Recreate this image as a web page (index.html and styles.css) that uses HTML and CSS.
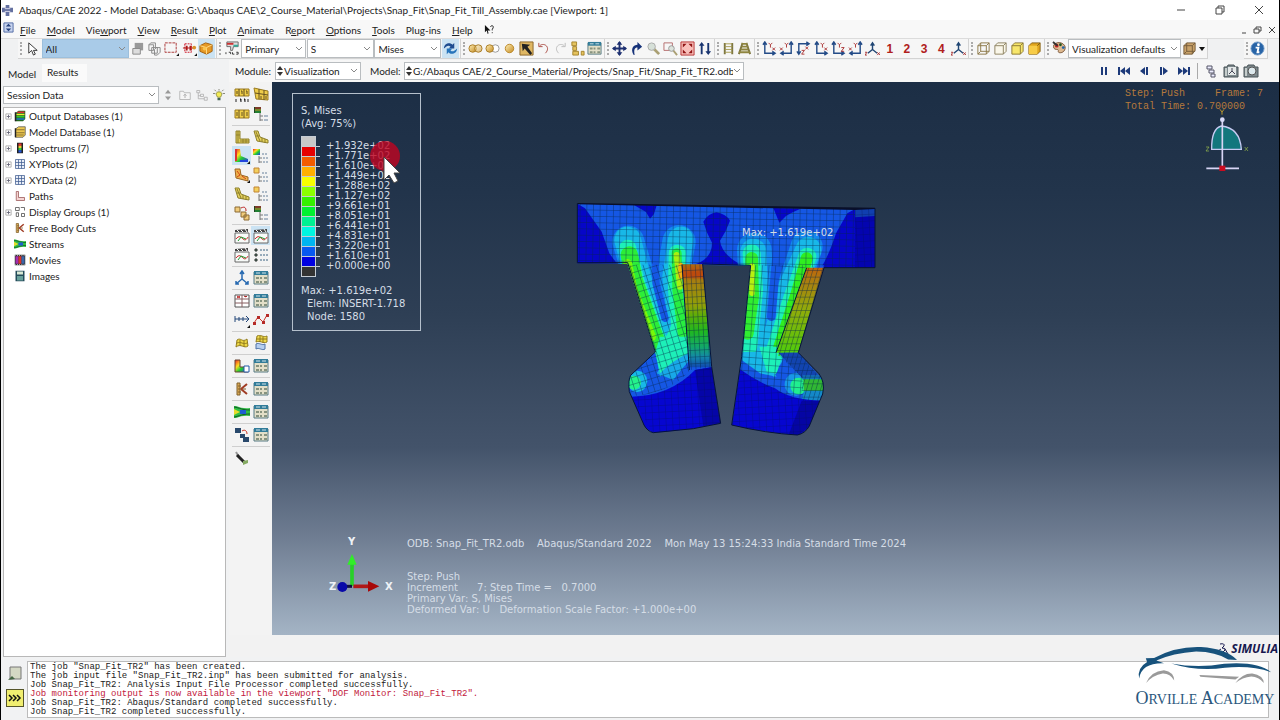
FILE: index.html
```html
<!DOCTYPE html>
<html lang="en">
<head>
<meta charset="utf-8">
<title>Abaqus/CAE 2022</title>
<link rel="stylesheet" href="styles.css">
</head>
<body>
<svg class="defs" aria-hidden="true">
  <defs>
    <linearGradient id="rainbow" x1="0" y1="0" x2="1" y2="1"><stop offset="0" stop-color="#e22"/><stop offset=".35" stop-color="#fd2"/><stop offset=".6" stop-color="#2c3"/><stop offset="1" stop-color="#23e"/></linearGradient>
    <linearGradient id="gold" x1="0" y1="0" x2="1" y2="1"><stop offset="0" stop-color="#fff0b8"/><stop offset="1" stop-color="#c48a20"/></linearGradient>
  </defs>
  <symbol id="cursor" viewBox="0 0 16 16"><path d="M4 2v11l3-3 2 5 2-1-2-4h4z" fill="#fff" stroke="#333"/></symbol>
  <symbol id="layers" viewBox="0 0 16 16"><path d="M5 2h9v8H5z" fill="#999"/><path d="M3 8h8v6H3z" fill="#ddd" stroke="#888"/></symbol>
  <symbol id="cubes" viewBox="0 0 16 16"><path d="M2 4l2-2h5v5M2 4h5v6H2zM5 7h6v6H5zM8 9l2-2h4v5l-3 3H8z" fill="#f5f5f5" stroke="#888"/></symbol>
  <symbol id="marquee" viewBox="0 0 16 16"><path d="M1 2h12v10H1z" fill="none" stroke="#a33" stroke-dasharray="3 1"/><path d="M13 16h3v-3z" fill="#111"/></symbol>
  <symbol id="entity" viewBox="0 0 16 16"><path d="M3 3h7v9H3z" fill="none" stroke="#c12" stroke-dasharray="2 1"/><path d="M4 5h2v5H4zM8 5h2v5H8zM1 7h12v1H1z" fill="#b01818"/><circle cx="13" cy="7" r="2" fill="#d9902c"/><path d="M13 16h3v-3z" fill="#111"/></symbol>
  <symbol id="box" viewBox="0 0 16 16"><path d="M1 5l6-3 7 2v7l-6 3-7-3z" fill="#e69a26" stroke="#a35f0c"/><path d="M1 5l7 2 6-3M8 7v7" fill="none" stroke="#ffdc8a"/><circle cx="6" cy="8" r="2" fill="#f9c552"/></symbol>
  <symbol id="fieldout" viewBox="0 0 16 16"><path d="M2 1h12v5H9l-1 4H6V6H2z" fill="#ddd" stroke="#666"/><path d="M2 2h7v2H2z" fill="#c33"/><path d="M9 4h5v2H9z" fill="#3a9"/><path d="M1 12v2M4 12h2v2M8 12v2h2M12 12h2v2h-2" stroke="#333" fill="none"/></symbol>
  <symbol id="sync" viewBox="0 0 16 16"><path d="M1 8c0-6 7-7 9-4l2-2v6H6l2-2C6 4 4 5 1 8z" fill="#1f4c90"/><path d="M15 8c0 6-7 7-9 4l-2 2V8h6l-2 2c2 2 4 1 7-2z" fill="#2774bb"/></symbol>
  <symbol id="union" viewBox="0 0 16 16"><circle cx="5" cy="8" r="4" fill="url(#gold)" stroke="#a87a22"/><circle cx="11" cy="8" r="4" fill="url(#gold)" stroke="#a87a22" fill-opacity=".6"/></symbol>
  <symbol id="differ" viewBox="0 0 16 16"><circle cx="11" cy="8" r="4" fill="#fff" stroke="#999"/><circle cx="5" cy="8" r="4" fill="url(#gold)" stroke="#a87a22"/></symbol>
  <symbol id="ball" viewBox="0 0 16 16"><circle cx="8" cy="8" r="4.500" fill="url(#gold)" stroke="#b98527"/></symbol>
  <symbol id="pick" viewBox="0 0 16 16"><path d="M1 1h14v14H1z" fill="#dfb763" stroke="#8b6527"/><path d="M3 3l9 1-3 2 5 7-2 2-6-7-2 3z" fill="#222"/></symbol>
  <symbol id="undo" viewBox="0 0 16 16"><path d="M3 2v4h4M4 5c5-4 12 2 6 8" fill="none" stroke="#a8483f"/></symbol>
  <symbol id="redo" viewBox="0 0 16 16"><path d="M13 2v4H9M12 5C7 1 0 7 6 13" fill="none" stroke="#bbb"/></symbol>
  <symbol id="parts" viewBox="0 0 16 16"><path d="M2 1h5v4H2zM3 6h4v4H3zM3 11h6v4H3zM12 11h3v4h-3z" fill="#e5c35e" stroke="#a4832c"/></symbol>
  <symbol id="panel" viewBox="0 0 16 16"><path d="M1 2h14v12H1z" fill="#e3dfc8" stroke="#567b84"/><path d="M1 1h14v4H1z" fill="#327c99"/><path d="M3 3h4M9 3h4" stroke="#cfe3ea"/><path d="M3 7h3v2H3zM7 7h2v2H7zM11 7h3v2h-3zM3 11h3v2H3zM7 11h2v2H7zM11 11h3v2h-3z" fill="#87937f"/></symbol>
  <symbol id="pan" viewBox="0 0 16 16"><path d="M8 1v14M1 8h14" stroke="#1c2f70" stroke-width="2"/><path d="M8 0l3 4H5zM8 16l3-4H5zM0 8l4-3v6zM16 8l-4-3v6z" fill="#1c2f70"/></symbol>
  <symbol id="rotate" viewBox="0 0 16 16"><path d="M5 15C1 8 5 4 9 4V1l5 5-5 4V7c-3 0-4 2-3 8z" fill="#17337a"/></symbol>
  <symbol id="zoomer" viewBox="0 0 16 16"><path d="M8 8l6 6" stroke="#aaa074" stroke-width="3"/><circle cx="6" cy="6" r="4" fill="#d6e0d8" stroke="#aaa"/></symbol>
  <symbol id="zoombox" viewBox="0 0 16 16"><path d="M1 2h9v8H1z" fill="none" stroke="#b46c6c"/><path d="M10 9l5 6" stroke="#aaa074" stroke-width="2"/><circle cx="9" cy="8" r="3" fill="#dce3dc" stroke="#999"/></symbol>
  <symbol id="fit" viewBox="0 0 16 16"><path d="M1 1h14v14H1z" fill="#f9c0bb" stroke="#b63232"/><path d="M3 3h4L3 7zM13 3H9l4 4zM3 13h4L3 9zM13 13H9l4-4z" fill="#921515"/></symbol>
  <symbol id="updown" viewBox="0 0 16 16"><path d="M5 1l3 4H6v9H4V5H2zM12 15l3-4h-2V2h-2v9H9z" fill="#17336f"/></symbol>
  <symbol id="parallel" viewBox="0 0 16 16"><path d="M4 2v12M12 2v12" stroke="#7c753f" stroke-width="2"/><path d="M4 3h8M4 6h8M4 9h8M4 12h8" stroke="#a59b50" fill="none"/></symbol>
  <symbol id="persp" viewBox="0 0 16 16"><path d="M6 2L2 14M10 2l4 12" stroke="#7c753f" stroke-width="2"/><path d="M5 3h6M5 6h7M4 9h8M2 12h12" stroke="#8e853f" stroke-width="2" fill="none"/></symbol>
  <symbol id="axesL" viewBox="0 0 16 16"><path d="M3 2v11h11M1 4l2-3 2 3M11 11l3 2-3 2" fill="none" stroke="#234b87" stroke-width="1.500"/><path d="M7 2l2 2 2-2M9 4v3M11 7l3 3M14 7l-3 3" stroke="#a33" fill="none"/></symbol>
  <symbol id="axesR" viewBox="0 0 16 16"><path d="M13 2v11H3M11 4l2-3 2 3M5 11l-3 2 3 2" fill="none" stroke="#234b87" stroke-width="1.500"/><path d="M6 2l2 2 2-2M8 4v3M1 7l3 3M4 7l-3 3" stroke="#a33" fill="none"/></symbol>
  <symbol id="axesD" viewBox="0 0 16 16"><path d="M3 14V3h10M1 11l2 3 2-3M11 1l3 2-3 2" fill="none" stroke="#234b87" stroke-width="1.500"/><path d="M10 6l3 3M13 6l-3 3M6 10h3l-3 4h3" stroke="#a33" fill="none"/></symbol>
  <symbol id="axesZ" viewBox="0 0 16 16"><path d="M3 2v11h11M1 4l2-3 2 3M11 11l3 2-3 2" fill="none" stroke="#234b87" stroke-width="1.500"/><path d="M7 2l2 2 2-2M9 4v3M11 7h3l-3 4h3" stroke="#a33" fill="none"/></symbol>
  <symbol id="iso" viewBox="0 0 16 16"><path d="M8 3v6l5 4M8 9l-5 4M6 5l2-3 2 3" fill="none" stroke="#204674" stroke-width="1.500"/><path d="M0 12h2l-2 3h2M13 12l3 3M16 12l-3 3" stroke="#a33" fill="none"/></symbol>
  <symbol id="wire" viewBox="0 0 16 16"><path d="M2 5h9v9H2zM5 2h9v9H5zM2 5l3-3M11 5l3-3M2 14l3-3M11 14l3-3" fill="none" stroke="#8c7747"/></symbol>
  <symbol id="hidden" viewBox="0 0 16 16"><path d="M2 5l3-3h9v9l-3 3H2zM2 5h9v9M11 5l3-3" fill="#faf7ea" stroke="#8c8160"/></symbol>
  <symbol id="fill" viewBox="0 0 16 16"><path d="M2 5l3-3h9v9l-3 3H2zM2 5h9v9M11 5l3-3" fill="#f7e66b" stroke="#8c7934"/></symbol>
  <symbol id="shade" viewBox="0 0 16 16"><path d="M2 5l3-3h9v9l-3 3H2z" fill="#e0a51e" stroke="#88641b"/><path d="M2 5h9v9H2z" fill="#f7cc48"/><path d="M11 5l3-3" stroke="#755b16"/></symbol>
  <symbol id="palette" viewBox="0 0 16 16"><path d="M2 4c5-5 13-1 12 4s-6 5-7 4 1-3-2-3-4-2-3-5z" fill="#ddb990" stroke="#795438"/><circle cx="5" cy="5" r="2" fill="#c22"/><circle cx="9" cy="4" r="1.500" fill="#252"/><circle cx="12" cy="7" r="1.500" fill="#26a"/><path d="M1 1l5 4" stroke="#333" stroke-width="2"/></symbol>
  <symbol id="cubebrown" viewBox="0 0 16 16"><path d="M2 5l3-3h9v8l-3 4H2zM2 5h9v9M11 5l3-3M5 2v9M5 11h9M5 11l-3 3" fill="#c8a169" stroke="#765d3b"/></symbol>
  <symbol id="info" viewBox="0 0 16 16"><circle cx="8" cy="8" r="7" fill="#2864a7" stroke="#77a0cc"/><circle cx="9" cy="4" r="1.500" fill="#fff"/><path d="M6 7h3l-1 5h2" fill="none" stroke="#fff" stroke-width="2"/></symbol>
  <symbol id="pause" viewBox="0 0 16 16"><path d="M5 4h2v8H5zM9 4h2v8H9z"/></symbol>
  <symbol id="first" viewBox="0 0 16 16"><path d="M2 4h2v8H2zM9 4v8L4 8zM14 4v8L9 8z"/></symbol>
  <symbol id="prev" viewBox="0 0 16 16"><path d="M9 4v8L4 8zM10 4h2v8h-2z"/></symbol>
  <symbol id="next" viewBox="0 0 16 16"><path d="M4 4h2v8H4zM7 4v8l5-4z"/></symbol>
  <symbol id="last" viewBox="0 0 16 16"><path d="M2 4v8l5-4zM7 4v8l5-4zM12 4h2v8h-2z"/></symbol>
  <symbol id="link" viewBox="0 0 16 16"><path d="M4 3h5v3H4zM6 7h5v3H6zM8 11h4v3H8z" fill="#eef" stroke="#556"/></symbol>
  <symbol id="camera" viewBox="0 0 16 16"><path d="M1 4h3l1-2h6l1 2h3v10H1z" fill="#7d888c" stroke="#4a5558"/><circle cx="9" cy="8" r="4" fill="#dce8ec" stroke="#555"/><path d="M2 5h2v8H2z" fill="#c5cccb"/></symbol>
  <symbol id="camera2" viewBox="0 0 16 16"><path d="M1 4h3l1-2h6l1 2h3v10H1z" fill="#7d888c" stroke="#4a5558"/><path d="M5 4h8v8H5z" fill="#e4e8e8"/><path d="M9 5v3l3 3M9 8l-3 3" stroke="#445" fill="none"/><path d="M2 5h2v8H2z" fill="#c5cccb"/></symbol>
  <symbol id="mesh1" viewBox="0 0 16 16"><path d="M1 2h14v7H1z" fill="#f0ce48" stroke="#9a7b22"/><path d="M5 2v7M10 2v7M3 4v3M7 4h1v3M12 4h1v3" stroke="#5d4b1c" fill="none"/><path d="M2 12v3M6 12h1v3M10 12h1v3M14 12v3" stroke="#222"/></symbol>
  <symbol id="mesh2" viewBox="0 0 16 16"><path d="M1 1l9 2 5 1v9l-12-1z" fill="#efcd4a" stroke="#997b22"/><path d="M2 6l13 2M6 2v10M11 3v10M8 9v3M13 9v3" stroke="#665220"/></symbol>
  <symbol id="mesh3" viewBox="0 0 16 16"><path d="M1 4h14v8H1z" fill="#f0ce48" stroke="#9a7b22"/><path d="M5 4v8M10 4v8M3 6v4M8 6v4M13 6v4" stroke="#665220"/></symbol>
  <symbol id="dbopt" viewBox="0 0 16 16"><path d="M1 1h7v6H1z" fill="#242"/><path d="M2 2h6" stroke="#d33"/><path d="M2 4h6" stroke="#cc3"/><path d="M2 6h6" stroke="#2b4"/><path d="M7 7v8M7 10h3M7 14h3" stroke="#777" fill="none"/><path d="M11 10h4M11 14h4" stroke="#67809b"/></symbol>
  <symbol id="treeopt" viewBox="0 0 16 16"><path d="M0 1h7v6H0z" fill="url(#rainbow)"/><path d="M6 8v7M6 10h3M6 14h3" stroke="#777" fill="none"/><path d="M9 6h6M10 10h5M10 14h5" stroke="#67809b" stroke-dasharray="2 1"/></symbol>
  <symbol id="goldopt" viewBox="0 0 16 16"><path d="M1 1h5v5H1z" fill="#f3cf5c" stroke="#c18434"/><path d="M6 8v7M6 10h3M6 14h3" stroke="#777" fill="none"/><path d="M9 6h6M10 10h5M10 14h5" stroke="#67809b" stroke-dasharray="2 1"/></symbol>
  <symbol id="shapeL" viewBox="0 0 16 16"><path d="M2 2h4v8h9v4H2z" fill="#ddc856" stroke="#90812a"/><path d="M4 2v12M2 6h4M6 12h9M9 10v4M12 10v4" stroke="#90812a"/></symbol>
  <symbol id="deformed" viewBox="0 0 16 16"><path d="M1 2h4l2 6 8 3v3L4 12z" fill="#e6d25d" stroke="#8c7e2b"/><path d="M3 3l4 9M3 7h3M9 9v4M12 10v4" stroke="#8c7e2b"/></symbol>
  <symbol id="contour" viewBox="0 0 16 16"><path d="M1 1h5l1 7 7 3v3H1z" fill="url(#rainbow)"/><path d="M1 1h2v12H1z" fill="#d33"/><path d="M6 12h8v2H6z" fill="#24d"/><path d="M13 16h3v-3z" fill="#111"/></symbol>
  <symbol id="symbols" viewBox="0 0 16 16"><path d="M1 2h5l1 6 7 2v4L2 11z" fill="#eeb04b" stroke="#9b6522"/><path d="M3 4l3 4M8 9l4 3M3 10l3-2" stroke="#d14616"/><path d="M13 16h3v-3z" fill="#111"/></symbol>
  <symbol id="swap" viewBox="0 0 16 16"><path d="M1 2h5v5H1zM7 7h5v5H7zM10 10h5v5h-5z" fill="#f0cb7b" stroke="#8b6a35"/><path d="M7 3c4-2 5 0 5 3" stroke="#b22" fill="none"/></symbol>
  <symbol id="film" viewBox="0 0 16 16"><path d="M1 5h14v10H1z" fill="#f7faf8" stroke="#666"/><path d="M1 2l13-1v3H1z" fill="#444"/><path d="M3 2l2 2M7 2l2 2M11 1l2 3" stroke="#fff"/><path d="M2 11c3-4 5-2 7 0s4 0 5-2" stroke="#c22" fill="none"/><path d="M4 13l3-4 5 2" stroke="#293" fill="none"/></symbol>
  <symbol id="list" viewBox="0 0 16 16"><path d="M2 2h2v2H2zM2 7h2v2H2zM2 12h2v2H2z" fill="#597" stroke="#333"/><path d="M7 3h8M7 8h8M7 13h8" stroke="#3a6282" stroke-dasharray="2 1"/></symbol>
  <symbol id="csys" viewBox="0 0 16 16"><path d="M8 2v7l6 5M8 9l-6 5M6 4l2-3 2 3M2 11v3h3M14 11v3h-3" stroke="#286ab1" stroke-width="1.500" fill="none"/></symbol>
  <symbol id="xy" viewBox="0 0 16 16"><path d="M1 2h14v12H1z" fill="#fff" stroke="#555"/><path d="M1 6h14M1 10h14M8 2v12" stroke="#875e61"/><path d="M3 3l3 2M6 3L3 5M10 3l2 1 1-1" stroke="#b22"/></symbol>
  <symbol id="path" viewBox="0 0 16 16"><path d="M1 4v6M1 7h14M12 4l3 3-3 3M5 5v4M9 5v4" stroke="#234679" fill="none"/><path d="M13 16h3v-3z" fill="#111"/></symbol>
  <symbol id="plot" viewBox="0 0 16 16"><path d="M1 11l4-6 5 5 4-7" stroke="#cf3429" fill="none"/><path d="M0 10h3v3H0zM4 4h3v3H4zM9 9h3v3H9zM13 2h3v3h-3z" fill="#b52a27"/></symbol>
  <symbol id="flag" viewBox="0 0 16 16"><path d="M3 5c4-3 5 3 10-1l1 7c-4 3-7-3-12 1z" fill="#eed845" stroke="#927c1e"/><path d="M6 5v6M10 6v6M3 8c4-2 6 2 10 0" stroke="#927c1e" fill="none"/></symbol>
  <symbol id="flags" viewBox="0 0 16 16"><path d="M4 1c4-2 6 2 10 0v6c-4 2-7-2-11 0z" fill="#efd94d" stroke="#927c1e"/><path d="M3 9c3-2 6 2 9 0v5c-3 2-6-2-9 0z" fill="#b7cff0" stroke="#4f72a8"/><path d="M7 1v6M10 2v6M4 4h10" stroke="#927c1e"/></symbol>
  <symbol id="cut" viewBox="0 0 16 16"><path d="M1 2h5v7h8v5H1z" fill="url(#rainbow)" stroke="#643"/><path d="M10 8h5v6h-5z" fill="#fff" stroke="#2359a4"/></symbol>
  <symbol id="freebody" viewBox="0 0 16 16"><path d="M3 2h3v12H3z" fill="#d9a855" stroke="#80602d"/><path d="M4 5h3M4 8h8M4 11h3" stroke="#80602d"/><path d="M7 8l6-5M7 8l6 5" stroke="#a03c24" stroke-width="2"/></symbol>
  <symbol id="stream" viewBox="0 0 16 16"><path d="M0 2h2q7 3 14 2v8q-7-1-14 2H0z" fill="#2fbf45"/><path d="M0 3c6 1 8 3 16 3M0 13c6-1 8-3 16-3" stroke="#135a26" fill="none"/><path d="M0 5l6 3-6 3z" fill="#e6dc2c"/><path d="M6 6h6v4H6z" fill="#1e5ed2"/></symbol>
  <symbol id="overlay" viewBox="0 0 16 16"><path d="M1 1h6v5H1zM6 7h5v4H6zM9 10h6v5H9z" fill="#28486b"/><path d="M8 4c3-2 5 0 5 3" stroke="#c32" fill="none"/></symbol>
  <symbol id="probe" viewBox="0 0 16 16"><path d="M2 2l3 5" stroke="#999" stroke-width="2"/><path d="M3 5l7 7" stroke="#222" stroke-width="3"/><path d="M9 11l5-1v3l-5 2z" fill="#85aa62"/></symbol>
  <symbol id="db" viewBox="0 0 16 16"><path d="M2 4l4-3h9v11l-3 3H2z" fill="#262"/><path d="M5 2h9v2H4z" fill="#d33"/><path d="M3 5h11v2H3z" fill="#ee3"/><path d="M3 8h11v2H3z" fill="#3c3"/><path d="M3 11h11v2H3z" fill="#27c"/><path d="M2 3v12" stroke="#222" stroke-width="2"/></symbol>
  <symbol id="mdb" viewBox="0 0 16 16"><path d="M2 4l4-3h9v11l-3 3H2z" fill="#edc84f" stroke="#555"/><path d="M3 5h11M3 9h11M3 12h10" stroke="#6b5727"/><path d="M2 3v12" stroke="#222" stroke-width="2"/></symbol>
  <symbol id="spectrum" viewBox="0 0 16 16"><path d="M4 1h8v14H4z" fill="#222"/><path d="M6 2h4v3H6z" fill="#e33"/><path d="M6 5h4v3H6z" fill="#ec3"/><path d="M6 8h4v3H6z" fill="#3c4"/><path d="M6 11h4v3H6z" fill="#25d"/></symbol>
  <symbol id="grid" viewBox="0 0 16 16"><path d="M2 2h12v12H2zM2 6h12M2 10h12M6 2v12M10 2v12" fill="#e8edf7" stroke="#425d91"/></symbol>
  <symbol id="paths" viewBox="0 0 16 16"><path d="M3 2h3v8h8v4H3z" fill="#f5d5d3" stroke="#965252"/></symbol>
  <symbol id="groups" viewBox="0 0 16 16"><path d="M2 2h5v4H2zM3 9h3v5H3zM10 10h4v4h-4z" fill="#fff" stroke="#444"/><path d="M9 2h5v4" stroke="#444" fill="none"/></symbol>
  <symbol id="movie" viewBox="0 0 16 16"><path d="M1 1h14v14H1z" fill="#333"/><path d="M2 3h4v10H2z" fill="#a32cb0"/><path d="M6 3h4v10H6z" fill="#db3328"/><path d="M10 3h4v10h-4z" fill="#3b66a9"/><path d="M1 2h14M1 14h14" stroke="#fff" stroke-dasharray="1 2"/></symbol>
  <symbol id="image" viewBox="0 0 16 16"><path d="M2 1h12v14H2z" fill="#244b5a"/><path d="M4 2h8v4H4z" fill="#d9e9d5"/><path d="M4 8h8v6H4z" fill="#68a09b"/></symbol>
  <symbol id="plus" viewBox="0 0 8 8"><path d="M1 1h6v6H1z" fill="#fff" stroke="#aaa"/><path d="M2 4h4M4 2v4" stroke="#667"/></symbol>
  <symbol id="spin" viewBox="0 0 16 16"><path d="M8 1l4 5H4zM8 15l4-5H4z" fill="#999"/></symbol>
  <symbol id="upfolder" viewBox="0 0 16 16"><path d="M1 3h5l1 2h8v9H1z" fill="#f5f5f5" stroke="#aaa"/><path d="M8 12V7M6 9l2-2 2 2" stroke="#999" fill="none"/></symbol>
  <symbol id="filter" viewBox="0 0 16 16"><path d="M1 2h4v3H1zM6 7h4v3H6zM11 11h4v4h-4zM3 5v8h8M3 9h3" fill="none" stroke="#aaa"/></symbol>
  <symbol id="bulb" viewBox="0 0 16 16"><path d="M5 9c-4-7 10-7 6 0l-1 2H6z" fill="#f2ec55" stroke="#777735"/><path d="M6 12h4v3H6z" fill="#465"/><path d="M0 6h3M13 6h3M2 1l2 2M14 1l-2 2M8 0v2" stroke="#665"/></symbol>
</svg>

<header class="title">
  <svg class="i11" viewBox="0 0 12 12"><path d="M4 0h4v3h4v5H8v4H4V8H0V3h4z" fill="#6470a0"/><path d="M3 4h6M3 7h6" stroke="#dde"/></svg>
  <h1>Abaqus/CAE 2022 - Model Database: G:\Abaqus CAE\2_Course_Material\Projects\Snap_Fit\Snap_Fit_Till_Assembly.cae [Viewport: 1]</h1>
  <div class="winbtns">
    <button aria-label="Minimize"><svg viewBox="0 0 10 10"><path d="M1 5h8"/></svg></button>
    <button aria-label="Restore"><svg viewBox="0 0 10 10"><path d="M1 3h6v6H1zM3 3V1h6v6H7"/></svg></button>
    <button aria-label="Close"><svg viewBox="0 0 10 10"><path d="M1 1l8 8M9 1L1 9"/></svg></button>
  </div>
</header>

<nav class="menu">
  <svg class="i11" viewBox="0 0 12 12"><path d="M1 1h10v10H1z" fill="#c7d3ee" stroke="#4c67a3"/><path d="M6 2l3 3H3zM6 10l3-3H3z" fill="#24407c"/></svg>
  <button><u>F</u>ile</button><button><u>M</u>odel</button><button>Vie<u>w</u>port</button><button><u>V</u>iew</button><button><u>R</u>esult</button><button><u>P</u>lot</button><button><u>A</u>nimate</button><button>R<u>e</u>port</button><button><u>O</u>ptions</button><button><u>T</u>ools</button><button>Plu<u>g</u>-ins</button><button><u>H</u>elp</button><button class="ctx" aria-label="Context help"><svg class="i11" viewBox="0 0 12 12"><path d="M1 1v8l2-2 1 4 1-1-1-3h3z" fill="#111"/><path d="M7 3c1-2 4-1 3 1L9 6v1M9 9v1" stroke="#111" fill="none"/></svg></button>
  <div class="childbtns">
    <button aria-label="Minimize viewport"><svg viewBox="0 0 10 10"><path d="M3 8h4"/></svg></button>
    <button aria-label="Restore viewport"><svg viewBox="0 0 10 10"><path d="M1 4h5v4H1zM3 4V2h5v4H6"/></svg></button>
    <button aria-label="Close viewport"><svg viewBox="0 0 10 10"><path d="M2 2l6 6M8 2L2 8"/></svg></button>
  </div>
</nav>

<div class="toolbar">
  <div class="grp g1"><i class="grip"></i><button aria-label="Select"><svg><use href="#cursor"/></svg></button><select class="w-all" aria-label="Selection filter"><option>All</option></select><button aria-label="Layers"><svg><use href="#layers"/></svg></button><button aria-label="Instances"><svg><use href="#cubes"/></svg></button><button aria-label="Drag shape"><svg><use href="#marquee"/></svg></button><button aria-label="Entity"><svg><use href="#entity"/></svg></button><button class="on" aria-label="Exterior"><svg><use href="#box"/></svg></button></div>
  <div class="grp g2"><i class="grip"></i><button aria-label="Field output"><svg><use href="#fieldout"/></svg></button><select class="w-pri" aria-label="Variable type"><option>Primary</option></select><select class="w-var" aria-label="Variable"><option>S</option></select><select class="w-var" aria-label="Invariant"><option>Mises</option></select><button class="on" aria-label="Sync"><svg><use href="#sync"/></svg></button></div>
  <div class="grp g3"><i class="grip"></i><button aria-label="Either"><svg><use href="#union"/></svg></button><button aria-label="Remove"><svg><use href="#differ"/></svg></button><button aria-label="Replace all"><svg><use href="#ball"/></svg></button><button aria-label="Replace selected"><svg><use href="#pick"/></svg></button><button aria-label="Undo"><svg><use href="#undo"/></svg></button><button aria-label="Redo"><svg><use href="#redo"/></svg></button><button aria-label="Display group"><svg><use href="#parts"/></svg></button><button aria-label="Group manager"><svg><use href="#panel"/></svg></button></div>
  <div class="grp g4"><i class="grip"></i><button aria-label="Pan"><svg><use href="#pan"/></svg></button><button aria-label="Rotate"><svg><use href="#rotate"/></svg></button><button aria-label="Magnify"><svg><use href="#zoomer"/></svg></button><button aria-label="Box zoom"><svg><use href="#zoombox"/></svg></button><button aria-label="Auto-fit"><svg><use href="#fit"/></svg></button><button aria-label="Cycle views"><svg><use href="#updown"/></svg></button></div>
  <div class="grp g5"><i class="grip"></i><button aria-label="Perspective off"><svg><use href="#parallel"/></svg></button><button aria-label="Perspective on"><svg><use href="#persp"/></svg></button></div>
  <div class="grp g6"><i class="grip"></i><button aria-label="Front"><svg><use href="#axesL"/></svg></button><button aria-label="Back"><svg><use href="#axesR"/></svg></button><button aria-label="Top"><svg><use href="#axesD"/></svg></button><button aria-label="Bottom"><svg><use href="#axesL"/></svg></button><button aria-label="Left"><svg><use href="#axesZ"/></svg></button><button aria-label="Right"><svg><use href="#axesR"/></svg></button><button aria-label="Iso"><svg><use href="#iso"/></svg></button><button class="num">1</button><button class="num">2</button><button class="num">3</button><button class="num">4</button><button aria-label="Save view"><svg><use href="#iso"/></svg></button></div>
  <div class="grp g7"><i class="grip"></i><button aria-label="Wireframe"><svg><use href="#wire"/></svg></button><button aria-label="Hidden"><svg><use href="#hidden"/></svg></button><button aria-label="Filled"><svg><use href="#fill"/></svg></button><button aria-label="Shaded"><svg><use href="#shade"/></svg></button></div>
  <div class="grp g8"><i class="grip"></i><button aria-label="Colors"><svg><use href="#palette"/></svg></button><select class="w-vis" aria-label="Color mapping"><option>Visualization defaults</option></select><button aria-label="Translucency"><svg><use href="#cubebrown"/></svg></button><button class="drop" aria-label="More"></button></div>
  <div class="grp g9"><i class="grip"></i><button aria-label="Information"><svg><use href="#info"/></svg></button></div>
</div>

<main class="main">
  <aside class="side">
    <div class="tabs"><button>Model</button><button class="active">Results</button></div>
    <div class="session"><select aria-label="Tree source"><option>Session Data</option></select><button aria-label="Spin"><svg><use href="#spin"/></svg></button><button aria-label="Up"><svg><use href="#upfolder"/></svg></button><button aria-label="Filter"><svg><use href="#filter"/></svg></button><button aria-label="Tip"><svg><use href="#bulb"/></svg></button></div>
    <ul class="tree">
      <li><svg class="ex"><use href="#plus"/></svg><svg><use href="#db"/></svg>Output Databases (1)</li>
      <li><svg class="ex"><use href="#plus"/></svg><svg><use href="#mdb"/></svg>Model Database (1)</li>
      <li><svg class="ex"><use href="#plus"/></svg><svg><use href="#spectrum"/></svg>Spectrums (7)</li>
      <li><svg class="ex"><use href="#plus"/></svg><svg><use href="#grid"/></svg>XYPlots (2)</li>
      <li><svg class="ex"><use href="#plus"/></svg><svg><use href="#grid"/></svg>XYData (2)</li>
      <li><span class="ex"></span><svg><use href="#paths"/></svg>Paths</li>
      <li><svg class="ex"><use href="#plus"/></svg><svg><use href="#groups"/></svg>Display Groups (1)</li>
      <li><span class="ex"></span><svg><use href="#freebody"/></svg>Free Body Cuts</li>
      <li><span class="ex"></span><svg><use href="#stream"/></svg>Streams</li>
      <li><span class="ex"></span><svg><use href="#movie"/></svg>Movies</li>
      <li><span class="ex"></span><svg><use href="#image"/></svg>Images</li>
    </ul>
  </aside>
  <section class="work">
    <div class="context">
      <label for="module">Module:</label><select id="module" class="spinner w-mod"><option>Visualization</option></select>
      <label for="odb" class="lm">Model:</label><select id="odb" class="spinner w-odb"><option>G:/Abaqus CAE/2_Course_Material/Projects/Snap_Fit/Snap_Fit_TR2.odb</option></select>
      <div class="play"><button aria-label="Pause"><svg><use href="#pause"/></svg></button><button aria-label="First"><svg><use href="#first"/></svg></button><button aria-label="Previous"><svg><use href="#prev"/></svg></button><button aria-label="Next"><svg><use href="#next"/></svg></button><button aria-label="Last"><svg><use href="#last"/></svg></button></div>
      <div class="shots"><button aria-label="Link viewports"><svg><use href="#link"/></svg></button><button aria-label="Print viewport"><svg><use href="#camera2"/></svg></button><button aria-label="Snapshot"><svg><use href="#camera"/></svg></button></div>
    </div>
    <div class="stage">
      <div class="toolbox">
        <div><button aria-label="Plot labels"><svg><use href="#mesh1"/></svg></button><button aria-label="Plot mesh"><svg><use href="#mesh2"/></svg></button><button aria-label="Elements"><svg><use href="#mesh3"/></svg></button><button aria-label="Common options"><svg><use href="#dbopt"/></svg></button></div>
        <div><button aria-label="Undeformed"><svg><use href="#shapeL"/></svg></button><button aria-label="Deformed"><svg><use href="#deformed"/></svg></button><button class="on" aria-label="Contours"><svg><use href="#contour"/></svg></button><button aria-label="Contour options"><svg><use href="#treeopt"/></svg></button><button aria-label="Symbols"><svg><use href="#symbols"/></svg></button><button aria-label="Symbol options"><svg><use href="#goldopt"/></svg></button><button aria-label="Orientations"><svg><use href="#deformed"/></svg></button><button aria-label="Orientation options"><svg><use href="#goldopt"/></svg></button><button aria-label="Multiple states"><svg><use href="#swap"/></svg></button><button aria-label="Superimpose options"><svg><use href="#dbopt"/></svg></button></div>
        <div><button aria-label="Animate scale"><svg><use href="#film"/></svg></button><button class="on" aria-label="Animate time history"><svg><use href="#film"/></svg></button><button aria-label="Animate harmonic"><svg><use href="#film"/></svg></button><button aria-label="Animation options"><svg><use href="#list"/></svg></button></div>
        <div><button aria-label="Create system"><svg><use href="#csys"/></svg></button><button aria-label="System manager"><svg><use href="#panel"/></svg></button></div>
        <div><button aria-label="XY data"><svg><use href="#xy"/></svg></button><button aria-label="XY manager"><svg><use href="#panel"/></svg></button><button aria-label="Path"><svg><use href="#path"/></svg></button><button aria-label="XY plot"><svg><use href="#plot"/></svg></button></div>
        <div><button aria-label="Field"><svg><use href="#flag"/></svg></button><button aria-label="Fields"><svg><use href="#flags"/></svg></button></div>
        <div><button aria-label="View cut"><svg><use href="#cut"/></svg></button><button aria-label="Cut manager"><svg><use href="#panel"/></svg></button></div>
        <div><button aria-label="Free body"><svg><use href="#freebody"/></svg></button><button aria-label="Free body manager"><svg><use href="#panel"/></svg></button></div>
        <div><button aria-label="Stream"><svg><use href="#stream"/></svg></button><button aria-label="Stream manager"><svg><use href="#panel"/></svg></button></div>
        <div><button aria-label="Overlay"><svg><use href="#overlay"/></svg></button><button aria-label="Overlay manager"><svg><use href="#panel"/></svg></button></div>
        <div><button aria-label="Probe"><svg><use href="#probe"/></svg></button></div>
      </div>
      <div class="viewport">
        <div class="legend">
          <p>S, Mises<br>(Avg: 75%)</p>
          <div class="scale">
            <div class="colors"><i class="c0"></i><i class="c1"></i><i class="c2"></i><i class="c3"></i><i class="c4"></i><i class="c5"></i><i class="c6"></i><i class="c7"></i><i class="c8"></i><i class="c9"></i><i class="c10"></i><i class="c11"></i><i class="c12"></i><i class="c13"></i></div>
            <ol><li>+1.932e+02</li><li>+1.771e+02</li><li>+1.610e+02</li><li>+1.449e+02</li><li>+1.288e+02</li><li>+1.127e+02</li><li>+9.661e+01</li><li>+8.051e+01</li><li>+6.441e+01</li><li>+4.831e+01</li><li>+3.220e+01</li><li>+1.610e+01</li><li>+0.000e+00</li></ol>
          </div>
          <p class="max">Max: +1.619e+02<br><span>Elem: INSERT-1.718</span><br><span>Node: 1580</span></p>
        </div>

        <svg class="part" viewBox="0 0 990 780">
          <defs>
            <pattern id="m0" width="20" height="19" patternUnits="userSpaceOnUse" patternTransform="rotate(1)"><path d="M0 0h20M0 0v19" class="ml"/></pattern>
            <pattern id="m1" width="19" height="20" patternUnits="userSpaceOnUse" patternTransform="rotate(-17)"><path d="M0 0h19M0 0v20" class="ml"/></pattern>
            <pattern id="m2" width="20" height="20" patternUnits="userSpaceOnUse" patternTransform="rotate(4)"><path d="M0 0h20M0 0v20" class="ml"/></pattern>
            <pattern id="s1" width="14" height="20" patternUnits="userSpaceOnUse" patternTransform="rotate(-3)"><path d="M0 0h14M0 0v20" class="ml"/></pattern>
            <pattern id="s2" width="14" height="20" patternUnits="userSpaceOnUse" patternTransform="skewX(-16)"><path d="M0 0h14M0 0v20" class="ml"/></pattern>
            <pattern id="s3" width="20" height="20" patternUnits="userSpaceOnUse" patternTransform="rotate(-3)"><path d="M0 0h20M0 0v20" class="md"/></pattern>
            <linearGradient id="hot" x1="0" y1="0" x2="0" y2="1"><stop offset="0" stop-color="#b06a10"/><stop offset=".08" stop-color="#bd4a0c"/><stop offset=".12" stop-color="#bd4a0c"/><stop offset=".15" stop-color="#a87c10"/><stop offset=".4" stop-color="#90a008"/><stop offset=".5" stop-color="#5cae08"/><stop offset=".65" stop-color="#20b820"/><stop offset=".8" stop-color="#12a868"/><stop offset=".9" stop-color="#1488a8"/><stop offset="1" stop-color="#1048b0"/></linearGradient>
            <linearGradient id="warm" x1="0" y1="0" x2="0" y2="1"><stop offset="0" stop-color="#c0640c"/><stop offset=".15" stop-color="#ac7c10"/><stop offset=".5" stop-color="#90ac0a"/><stop offset="1" stop-color="#50cc0c"/></linearGradient>
            <clipPath id="cl"><path d="M52 41H500V224H428L438 330L455 530L482 700L400 716Q330 726 280 728Q262 724 252 705L208 605Q204 570 212 556L286 486L203 222H52z"/></clipPath>
            <clipPath id="cr"><path d="M500 50H860V233H792L715 488L776 550Q796 575 788 612L748 708Q736 730 712 735Q620 730 515 705L545 500L572 226H500z"/></clipPath>
          </defs>
          <path d="M52 41L885 57L885 233L52 218z" fill="#1557e4"/>
          <path d="M52 41L75 55L125 125L148 190L170 220H52zM222 45L290 46L282 72L270 86L258 66zM430 95Q445 70 470 67Q498 72 510 92Q498 126 480 152Q486 195 545 225L408 222Q456 205 456 158Q438 126 430 95zM640 54L722 56Q688 70 678 78L658 98zM862 70L885 57V233H783Q805 200 828 130z" fill="#0606c8"/>
          <g clip-path="url(#cl)">
            <path d="M200 222H428L455 530L482 700L270 730L205 600V560L285 490z" fill="#1557e4"/>
            <g fill="none" stroke-linecap="round" stroke-linejoin="round">
              <path d="M205 155L240 270L300 440L325 500" stroke="#1488ee" stroke-width="96"/>
              <path d="M357 155L338 260L350 380L330 490" stroke="#1488ee" stroke-width="100"/>
              <path d="M203 150L235 270L290 430L310 530" stroke="#18b8e8" stroke-width="80"/>
              <path d="M362 148L345 260L365 420L330 500" stroke="#18b8e8" stroke-width="76"/>
              <path d="M203 175L230 280L285 430L320 500L360 410L350 300L352 190" stroke="#1df0b8" stroke-width="52"/>
              <path d="M208 195L222 270L280 430L300 480" stroke="#2ced38" stroke-width="52"/>
              <path d="M203 220L220 300L275 440" stroke="#78f808" stroke-width="26"/>
              <path d="M350 190L352 300L368 430" stroke="#28ee40" stroke-width="30"/>
              <path d="M350 195L360 290" stroke="#a8f010" stroke-width="18"/>
              <path d="M362 225V260" stroke="#f0b010" stroke-width="14"/>
              <path d="M285 190L288 280L315 385" stroke="#1557e4" stroke-width="22"/>
            </g>
            <path d="M286 485L205 565V610L300 610L390 550L455 530L450 485L390 490Q345 525 300 560z" fill="#1557e4"/>
            <path d="M290 550L340 570Q370 530 390 510L452 500V475H385L335 480z" fill="#18a8e8"/>
            <path d="M286 486L300 550Q340 510 385 490V440L300 440z" fill="#1df0b8"/>
            <ellipse cx="232" cy="574" rx="30" ry="32" fill="#18b8e8"/><circle cx="222" cy="578" r="21" fill="#24f28c"/>
            <path d="M365 223H428L454 532H390z" fill="url(#hot)"/>
            <path d="M214 620Q330 618 405 540L455 532L482 700L400 716L280 730L252 710z" fill="#0606d0"/>
            <path d="M405 540L455 532L482 700L430 708z" fill="#0505a8"/>
          </g>
          <g clip-path="url(#cr)">
            <path d="M572 226H792L715 488L790 580V612L748 710L712 738L515 705L545 500z" fill="#1557e4"/>
            <g fill="none" stroke-linecap="round" stroke-linejoin="round">
              <path d="M583 180L590 300L575 470" stroke="#1488ee" stroke-width="104"/>
              <path d="M740 170L670 380L610 500" stroke="#1488ee" stroke-width="96"/>
              <path d="M580 185L585 300L570 480" stroke="#18b8e8" stroke-width="78"/>
              <path d="M745 180L690 300L630 500" stroke="#18b8e8" stroke-width="78"/>
              <path d="M575 190L582 300L565 470" stroke="#1df0b8" stroke-width="54"/>
              <path d="M742 200L695 330L625 540" stroke="#1df0b8" stroke-width="54"/>
              <path d="M575 205L578 320L562 430" stroke="#30ee30" stroke-width="38"/>
              <path d="M740 205L710 310L655 480" stroke="#30ee20" stroke-width="36"/>
              <path d="M576 228V310" stroke="#b8f010" stroke-width="16"/>
              <path d="M650 195L634 380" stroke="#1557e4" stroke-width="26"/>
            </g>
            <path d="M545 490L600 490L625 535L640 560L700 488L715 488L790 570V640H670L540 550z" fill="#1557e4"/>
            <path d="M548 486H600L650 560L600 550L545 510z" fill="#18b8e8"/>
            <path d="M598 470H660L645 550L620 545z" fill="#1df0b8"/>
            <circle cx="708" cy="583" r="34" fill="#1898e8"/><circle cx="716" cy="588" r="25" fill="#20ee90"/>
            <path d="M740 233H792L715 488H648z" fill="url(#warm)"/>
            <path d="M655 488H715L785 568H730z" fill="#1244b0"/>
            <path d="M728 556H790V570H728z" fill="#1474b8"/>
            <path d="M730 568H790V612H732z" fill="#30b834"/><path d="M732 602H790L782 632H725z" fill="#1488c8"/>
            <path d="M540 538Q590 575 645 595Q690 630 782 632L745 715L712 740L515 708z" fill="#0606d0"/>
            <path d="M725 632H782L748 710L712 737H685z" fill="#0505a4"/>
          </g>
          <path d="M52 41L885 57V233L792 233L572 226L428 222L52 218z" fill="url(#m0)"/>
          <g clip-path="url(#cl)"><path d="M200 224H366L390 540Q330 612 214 618L205 600V560L286 490z" fill="url(#m1)"/><path d="M365 223H428L455 532L390 540z" fill="url(#s1)"/><path d="M214 620Q330 618 405 540L455 532L482 700L280 730z" fill="url(#s3)"/></g>
          <g clip-path="url(#cr)"><path d="M572 226H740L648 488L728 560V632Q640 610 540 540L545 490z" fill="url(#m2)"/><path d="M740 233H792L715 488L790 570V632H725V560L648 488z" fill="url(#s2)"/><path d="M540 538Q590 575 645 595Q690 630 782 632L745 740L515 708z" fill="url(#s3)"/></g>
          <path d="M885 57L945 55V232L885 233z" fill="#0404b0"/><path d="M885 57L945 55V78L885 82z" fill="#103fb0"/><path d="M885 57L945 55V232L885 233z" fill="url(#s3)"/>
          <path d="M52 39L945 53V57L885 60L52 43z" fill="#090f29"/>
          <path d="M52 41V218H203L286 486L212 556Q204 570 208 605L252 705Q262 724 280 728L400 716L482 700L455 530L428 222L572 226L545 500L515 705Q620 730 712 735Q736 730 748 708L788 612Q796 575 776 550L715 488L792 233H945V55M366 224L388 540M740 233L648 488" fill="none" stroke="#061438" stroke-width="3"/>
        </svg>
        <span class="maxtag">Max: +1.619e+02</span>

        <pre class="frame">Step: Push     Frame: 7
Total Time: 0.700000</pre>
        <svg class="compass" viewBox="0 0 132 180"><path d="M23 112Q22 50 52 42Q108 48 112 112z" fill="#12777d" stroke="#c6caf2" stroke-width="4"/><path d="M55 25V165" stroke="#d8d5f5" stroke-width="5"/><circle cx="55" cy="23" r="7" fill="#d9dcfa"/><path d="M7 169H105" stroke="#d8d5f5" stroke-width="5"/><path d="M46 161h18v16H46z" fill="#c80c20"/><path d="M6 105h9l-9 12h9M122 105l10 12M132 105l-10 12" stroke="#9cbe4b" stroke-width="2" fill="none"/><path d="M48 -8l6 8 6-8M54 0v8" stroke="#bd9b2f" stroke-width="3" fill="none"/></svg>

        <svg class="triad" viewBox="0 0 195 180"><path d="M66 138V60" stroke="#28d028" stroke-width="11"/><path d="M52 74L66 42L80 74z" fill="#30ee28"/><path d="M70 139H118" stroke="#b01818" stroke-width="11"/><path d="M114 123L148 139L114 155z" fill="#a80808"/><path d="M66 139H38" stroke="#101040" stroke-width="9"/><circle cx="37" cy="141" r="15" fill="#0808a8"/></svg>
        <span class="ax ax-y">Y</span><span class="ax ax-x">X</span><span class="ax ax-z">Z</span>
        <pre class="odb">ODB: Snap_Fit_TR2.odb    Abaqus/Standard 2022    Mon May 13 15:24:33 India Standard Time 2024</pre>
        <pre class="state">Step: Push
Increment      7: Step Time =   0.7000
Primary Var: S, Mises
Deformed Var: U   Deformation Scale Factor: +1.000e+00</pre>
        <svg class="pointer" viewBox="0 0 34 44"><circle cx="17" cy="16" r="15" fill="#c00420" opacity=".8"/><path d="M16 17V40L21 35L26 43L30 41L26 33H32z" fill="#fff" stroke="#444"/></svg>
      </div>
    </div>
    <div class="strip"><svg viewBox="0 0 12 12"><path d="M3 1q5-1 4 2L5 5q4 0 3 2L5 10M4 6l-3 2M8 6l3 5" stroke="#17184f" fill="none"/></svg><span>SIMULIA</span></div>
  </section>
</main>

<footer class="messages">
  <div class="mtabs"><button aria-label="Messages"><svg viewBox="0 0 16 16"><path d="M3 1h11v12H3z" fill="#d4d8c4" stroke="#777"/><path d="M1 14l4-4 3 3z" fill="#464"/></svg></button><button class="cli" aria-label="Command line"><svg viewBox="0 0 16 16"><path d="M2 5l3 3-3 3M6 5l3 3-3 3M10 5l3 3-3 3" fill="none" stroke="#111" stroke-width="1.500"/></svg></button></div>
  <div class="log">
    <p>The job "Snap_Fit_TR2" has been created.</p>
    <p>The job input file "Snap_Fit_TR2.inp" has been submitted for analysis.</p>
    <p>Job Snap_Fit_TR2: Analysis Input File Processor completed successfully.</p>
    <p class="red">Job monitoring output is now available in the viewport "DOF Monitor: Snap_Fit_TR2".</p>
    <p>Job Snap_Fit_TR2: Abaqus/Standard completed successfully.</p>
    <p>Job Snap_Fit_TR2 completed successfully.</p>
  </div>
  <div class="brand">
    <svg viewBox="102 54 420 130"><path d="M113 152Q106 120 137 102L133 91L158 90Q225 54 300 57Q375 62 409 96L382 95Q345 72 285 71Q215 76 165 98L188 106Q120 104 113 152z" fill="#17527c"/><path d="M210 107Q290 122 370 108Q470 100 512 133Q450 112 372 120Q290 132 210 107z" fill="#17527c"/><path d="M134 166Q148 130 188 127Q218 132 219 158Q206 136 184 137Q154 142 134 166zM295 142L415 147L404 155L298 147zM404 166Q425 136 455 137Q488 142 490 166Q474 146 452 146Q425 148 404 166z" fill="#9a9a9a"/></svg>
    <span><b>O</b>RVILLE <b>A</b>CADEMY</span>
  </div>
</footer>
</body>
</html>
```

FILE: styles.css
```css
* { box-sizing: border-box; }
html { height: 100%; }
body { margin: 0; min-height: 100%; display: flex; flex-direction: column; overflow: hidden; background: #f1f2f3; border: solid #000; border-width: 0 1px; color: #222; font: 10px/16px Lato, "Noto Sans", sans-serif; position: relative; }
.defs { position: absolute; width: 0; height: 0; }
button { margin: 0; padding: 0; border: 0; background: none; color: inherit; font: inherit; }
p, h1, ul, ol, pre { margin: 0; padding: 0; list-style: none; font-weight: normal; }
.i11 { width: 11px; height: 11px; flex: none; }
select { appearance: none; margin: 0; height: 19px; padding: 0 10px 0 3px; border: 1px solid #b9bdc0; border-radius: 0; color: #222; font: inherit; line-height: 16px; background: #fff url("data:image/svg+xml,%3Csvg xmlns='http://www.w3.org/2000/svg' width='8' height='6'%3E%3Cpath d='M1 1l3 3 3-3' fill='none' stroke='%23888'/%3E%3C/svg%3E") no-repeat right 2px center; }

.title { display: flex; align-items: center; gap: 6px; height: 20px; padding-left: 1px; background: #fff; }
.title h1 { font-size: 10px; line-height: 16px; white-space: nowrap; }
.winbtns { margin-left: auto; display: flex; gap: 29px; padding-right: 15px; }
.winbtns svg, .childbtns svg { width: 10px; height: 10px; display: block; fill: none; stroke: #444; }
.menu { display: flex; align-items: center; gap: 11px; height: 18px; padding: 1px 0 0 2px; background: #f8f8f8; }
.menu > .i11 { margin: -4px -5px 0 0; }
.menu .ctx { display: flex; }
.childbtns { margin-left: auto; display: flex; gap: 4px; padding-right: 2px; }

.toolbar { display: flex; height: 22px; padding-left: 17px; border-top: 1px solid #dcdcdc; background: #f0f1f2; }
.grp { display: flex; align-items: center; justify-content: space-between; flex: none; height: 20px; padding-right: 1px; border-right: 1px solid #d3d3d3; border-bottom: 1px solid #d3d3d3; background: #f6f6f6; }
.grp button { width: 17px; height: 19px; display: flex; align-items: center; justify-content: center; }
.grp svg { width: 15px; height: 15px; }
.grip { width: 4px; height: 13px; margin-left: 2px; border-left: 2px dotted #aaa; }
.on { background: #cbe3f3; }
.g1 { width: 199px; } .g2 { width: 244px; } .g3 { width: 144px; } .g4 { width: 110px; } .g5 { width: 40px; } .g6 { width: 214px; } .g7 { width: 76px; } .g8 { width: 163px; }
.g9 { width: 24px; margin: 0 11px 0 auto; }
.w-all { width: 87px; background-color: #a9cbe8; border-color: #9cbfdc; }
.w-pri { width: 65px; } .w-var { width: 67px; } .w-vis { width: 113px; }
.grp .num { color: #b0201c; font: bold 12px "Liberation Sans", sans-serif; }
.grp .drop { width: 8px; }
.drop::after { content: ""; border: 3px solid transparent; border-top: 4px solid #111; border-bottom: 0; }

.main { flex: 1; display: flex; min-height: 0; }
.side { width: 228px; flex: none; display: flex; flex-direction: column; padding: 4px 2px 0 2px; }
.tabs { display: flex; padding-bottom: 4px; }
.tabs button { height: 18px; padding: 2px 6px 0 5px; }
.tabs .active { background: #fafafa; padding: 0 9px 2px 5px; }
.session { display: flex; align-items: center; height: 18px; gap: 1px; margin-bottom: 3px; }
.session select { width: 159px; height: 18px; }
.session button { width: 16px; height: 16px; padding: 2px; flex: none; }
.session svg { width: 12px; height: 12px; display: block; }
.tree { flex: 1; border: 1px solid #b8b8b8; background: #fff; padding: 0 1px; margin-right: 1px; }
.tree li { display: flex; align-items: center; height: 16px; gap: 2px; }
.tree svg { width: 12px; height: 12px; margin-right: 1px; }
.tree .ex { width: 7px; height: 7px; margin: 0; }

.work { flex: 1; min-width: 0; display: flex; flex-direction: column; }
.context { display: flex; align-items: center; height: 22px; padding: 0 20px 0 6px; background: #f6f6f6; }
.context select { height: 18px; margin-left: 3px; }
.context label { min-width: 37px; }
.context .lm { margin-left: 9px; min-width: 31px; }
.context .spinner { padding-left: 8px; background-image: url("data:image/svg+xml,%3Csvg xmlns='http://www.w3.org/2000/svg' width='8' height='6'%3E%3Cpath d='M1 1l3 3 3-3' fill='none' stroke='%23888'/%3E%3C/svg%3E"), url("data:image/svg+xml,%3Csvg xmlns='http://www.w3.org/2000/svg' width='6' height='12'%3E%3Cpath d='M0 5l3-4 3 4zM0 7l3 4 3-4z' fill='%23333'/%3E%3C/svg%3E"); background-repeat: no-repeat; background-position: right 2px center, left 1px center; }
.w-mod { width: 86px; } .w-odb { width: 340px; }
.play, .shots { display: flex; align-items: center; gap: 4px; }
.play { margin-left: auto; padding-right: 5px; border-right: 1px solid #aaa; }
.play svg, .shots svg { width: 16px; height: 16px; display: block; fill: #1d3a7a; }
.shots { padding-left: 5px; }
.stage { flex: 1; display: flex; min-height: 0; }
.toolbox { width: 43px; flex: none; padding: 2px 2px 0 3px; background: #f3f3f3; }
.toolbox > div { display: grid; grid-template-columns: 19px 19px; grid-auto-rows: 19px; padding: 1px 0 2px; border-bottom: 1px solid #cfcfcf; }
.toolbox > div:last-child { border: 0; }
.toolbox button { display: flex; align-items: center; justify-content: center; }
.toolbox svg { width: 16px; height: 16px; }
.strip { height: 22px; display: flex; justify-content: flex-end; align-items: center; gap: 2px; padding: 6px 1px 0 0; background: #f2f2f2; color: #17184f; font: italic bold 12px/14px "Open Sans", sans-serif; }
.strip svg { width: 12px; height: 12px; }

.viewport { position: relative; flex: 1; min-width: 0; background: linear-gradient(#1c2e45 0%, #22344b 20%, #2e3f55 42%, #43536a 66%, #6e7c91 82%, #a4b4c5 100%); color: #d5dde6; font: 10px/12px "DejaVu Sans", sans-serif; overflow: hidden; }
.viewport pre { font: inherit; }
.legend { position: absolute; left: 20px; top: 11px; width: 129px; height: 238px; padding: 10px 8px; border: 1px solid #b5c0cc; }
.legend p { line-height: 13px; }
.scale { display: flex; margin: 6px 0 7px; }
.colors { width: 15px; border: 1px solid #c5ccd4; border-bottom: 0; }
.colors i { display: block; height: 10px; border-bottom: 1px solid #c5ccd4; position: relative; }
.colors i:not(:last-child)::after { content: ""; position: absolute; left: 13px; top: 9px; width: 5px; border-top: 1px solid #c5ccd4; }
.c0 { background: #c8c8c8; } .c1 { background: #e60000; } .c2 { background: #f25c00; } .c3 { background: #ffb000; } .c4 { background: #f8ff00; } .c5 { background: #8cff00; } .c6 { background: #34f000; } .c7 { background: #00f030; } .c8 { background: #00f092; } .c9 { background: #00f5e0; } .c10 { background: #00b4f0; } .c11 { background: #0858f0; } .c12 { background: #0000e0; } .c13 { background: #333; }
.scale ol { padding: 5px 0 0 10px; line-height: 10px; }
.legend span { padding-left: 6px; }
.part { position: absolute; left: 288px; top: 108px; width: 330px; height: 260px; }
.ml { stroke: #042448; stroke-width: 3; fill: none; opacity: .75; }
.md { stroke: #02104c; stroke-width: 3; fill: none; opacity: .5; }
.maxtag { position: absolute; left: 470px; top: 145px; }
.viewport .frame { position: absolute; right: 16px; top: 5px; color: #b5793c; font: 10px/13px "Liberation Mono", monospace; }
.compass { position: absolute; right: 31px; top: 30px; width: 44px; height: 60px; overflow: visible; }
.triad { position: absolute; left: 58px; top: 458px; width: 65px; height: 60px; }
.ax { position: absolute; font-weight: bold; color: #eef2f6; }
.ax-y { left: 76px; top: 454px; } .ax-x { left: 113px; top: 499px; } .ax-z { left: 57px; top: 499px; }
.odb { position: absolute; left: 135px; top: 456px; }
.viewport .state { position: absolute; left: 135px; top: 489px; line-height: 11px; }
.pointer { position: absolute; left: 96px; top: 58px; width: 34px; height: 44px; }

.messages { display: flex; position: relative; padding: 4px 10px 2px 2px; background: #f1f2f3; }
.mtabs { width: 24px; flex: none; display: flex; flex-direction: column; gap: 7px; align-items: center; padding-top: 5px; }
.mtabs svg { width: 16px; height: 16px; display: block; }
.cli { background: #f0ee70; border: 1px solid #55552a; }
.log { flex: 1; border: 1px solid #bbb; background: #fff; padding: 1px 2px 0; color: #222; font: 9px/9px "Liberation Mono", monospace; }
.red { color: #c2183c; }
.brand { position: absolute; right: 3px; bottom: 11px; width: 142px; display: flex; flex-direction: column; align-items: center; color: #2a567c; font: 14px/18px "Liberation Serif", serif; white-space: nowrap; }
.brand b { font-size: 18px; font-weight: normal; line-height: 18px; }
.brand svg { width: 140px; height: 43px; overflow: visible; }
```
